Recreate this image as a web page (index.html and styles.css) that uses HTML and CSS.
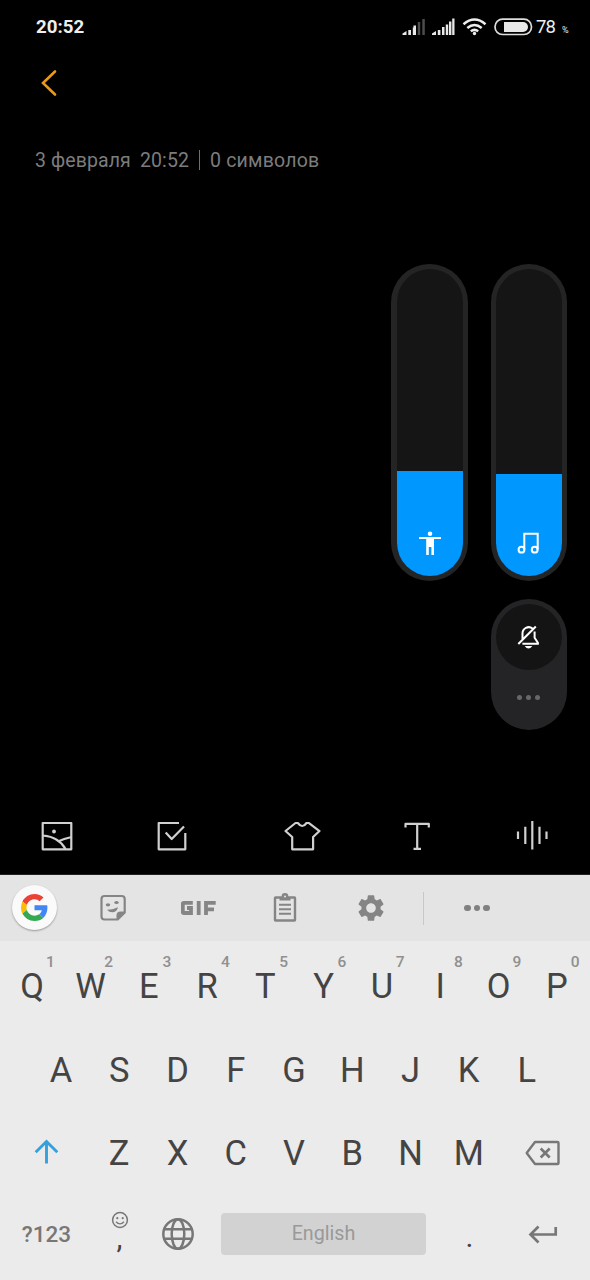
FILE: index.html
```html
<!DOCTYPE html>
<html lang="ru">
<head>
<meta charset="utf-8">
<title>Заметки</title>
<link rel="stylesheet" href="styles.css">
</head>
<body>
<div class="phone">
  <header class="status">
    <span class="clock">20:52</span>
    <svg class="signals" viewBox="402 17 86 20">
      <g fill="#e8e8e8">
        <path d="M402.500 35v-1.500l4-2.500V35zM408.300 30h2.700v5h-2.700zM412.800 27.500h2.700V35h-2.700z"/>
        <path d="M413.500 25.500h2.500V35h-2.500z"/>
        <path fill="#4c4c4c" d="M417.800 22h2.400v13h-2.400zM422.300 19h2.500v16h-2.500z"/>
        <path d="M432 35v-1.500l4-2.500V35zM437.800 30h2.600v5h-2.600zM442 27h2.500v8H442zM445.800 24.500h2.400V35h-2.400zM449 21.500h2.400V35H449zM452.200 18.500h2.300V35h-2.300z"/>
      </g>
      <g fill="none" stroke="#eee" stroke-width="2.500">
        <path d="M463.500 24.300q11-9.500 22 0M467.300 28q7.200-6 14.400 0M470.800 31.300q3.700-2.800 7.400 0"/>
      </g>
      <circle cx="474.500" cy="33.500" r="1.700" fill="#eee"/>
    </svg>
    <svg class="battery" viewBox="494 18 39 18"><rect x="495" y="19.200" width="36.500" height="15.300" rx="7.600" fill="none" stroke="#ddd" stroke-width="1.700"/><path d="M504 22h19a5 5 0 0 1 0 10h-19z" fill="#e8e8e8"/></svg>
    <span class="level">78</span><span class="percent">%</span>
  </header>
  <nav class="back"><svg width="20" height="30" viewBox="40 68 20 30"><path d="M55 71.500L43 83l12 11.500" fill="none" stroke="#e99a1c" stroke-width="2.600" stroke-linecap="round"/></svg></nav>
  <main class="note">
    <div class="meta"><span class="day">3 февраля</span><span class="time">20:52</span><i class="bar"></i><span class="count">0 символов</span></div>
  </main>
  <aside class="volume">
    <div class="slider access"><div class="fill fill-access"><svg width="24" height="26" viewBox="417 530 24 26" fill="#fff"><circle cx="429" cy="533.800" r="2.300"/><path d="M418 537h22v2h-7v16h-2.600v-8h-2.600v8h-2.600v-16H418z"/></svg></div></div>
    <div class="slider"><div class="fill fill-media"><svg width="24" height="26" viewBox="517 530 24 26" fill="none" stroke="#fff" stroke-width="2"><path d="M524.300 549.500V533.700h13.400v15.800"/><circle cx="521.500" cy="549.700" r="2.900"/><circle cx="534.700" cy="549.700" r="2.900"/></svg></div></div>
    <div class="ringer">
      <div class="mute"><svg width="26" height="28" viewBox="516 623 26 28" fill="none" stroke="#fff" stroke-width="2"><path d="M522.500 639v-5.500a6.200 6.200 0 0 1 10-5M534.600 631.500v6.200l3.300 5v1h-15.500M518.300 644l17.500-17.500"/><path d="M524.700 646h7.600q-3.800 5-7.600 0z" fill="#fff" stroke="none"/></svg></div>
      <div class="more"><i></i><i></i><i></i></div>
    </div>
  </aside>
  <nav class="tools">
    <span><svg width="36" height="36" viewBox="39 818 36 36"><path d="M42.700 823h28.600v26.300H42.700zM43 835.500q16 1.500 22.500 13.500M58.500 841.300q5-2.500 13-4.300"/><circle class="dot" cx="54" cy="831.500" r="1.900"/></svg></span>
    <span><svg width="36" height="36" viewBox="154 818 36 36"><path d="M179 823h-20.300v26.300h26.600V833M165.700 832.500l6 6.500L184 826.500"/></svg></span>
    <span class="middle"><svg width="40" height="36" viewBox="282 818 40 36"><path d="M295.500 823L285.500 831l6.700 6v12.300h20.900V837l6.400-6-10.500-8h-2.500q-4.300 6-8.600 0z"/></svg></span>
    <span><svg width="36" height="36" viewBox="399 818 36 36"><path d="M405.500 827.500v-3.600h23.300v3.600M417.200 824v24.800M413.500 848.800h7.500"/></svg></span>
    <span><svg width="36" height="36" viewBox="514 818 36 36"><path d="M518 831.500v7.500M525.300 826.700V844M532.300 821v28.500M539.500 826.700V844M546.500 831.500v7.500"/></svg></span>
  </nav>
  <section class="keyboard">
    <div class="strip">
      <span class="cell first"><span class="google"><svg width="27" height="27" viewBox="0 0 48 48"><path fill="#ea4335" d="M24 9.500c3.540 0 6.710 1.220 9.210 3.600l6.850-6.850C35.900 2.380 30.470 0 24 0 14.620 0 6.510 5.380 2.560 13.220l7.980 6.190C12.430 13.720 17.740 9.500 24 9.500z"/><path fill="#4285f4" d="M46.980 24.550c0-1.570-.15-3.090-.38-4.550H24v9.020h12.940c-.58 2.960-2.260 5.480-4.780 7.180l7.730 6c4.510-4.180 7.090-10.360 7.090-17.650z"/><path fill="#fbbc05" d="M10.530 28.590A14.500 14.500 0 0 1 9.770 24c0-1.600.27-3.140.76-4.590l-7.980-6.190A24 24 0 0 0 0 24c0 3.880.92 7.540 2.560 10.780z"/><path fill="#34a853" d="M24 48c6.480 0 11.930-2.130 15.890-5.810l-7.730-6c-2.150 1.450-4.920 2.300-8.160 2.300-6.260 0-11.570-4.220-13.470-9.910l-7.980 6.190C6.510 42.620 14.620 48 24 48z"/></svg></span></span>
      <span class="cell wide"><svg width="28" height="28" viewBox="99 894 28 28"><path d="M104.500 896h17.200a3 3 0 0 1 3 3v13.500l-7 7h-13.200a3 3 0 0 1-3-3V899a3 3 0 0 1 3-3z" fill="none" stroke="#858585" stroke-width="2.200"/><path d="M125 911.500v1.500l-7 7h-1.500v-4.500q0-4 4-4z" fill="#858585"/><ellipse cx="108" cy="904.800" rx="2.200" ry="1.600" fill="#858585"/><ellipse cx="116.500" cy="902.500" rx="2.200" ry="1.600" fill="#858585"/><path d="M107 909.700q5.500 0 11-2.500-1 4.700-5 5-3.500.300-6-2.500z" fill="#858585"/></svg></span>
      <span class="cell gif"><svg width="36" height="16" viewBox="181 899 36 16" fill="none" stroke="#858585" stroke-width="3.800"><path d="M192.800 901.800H183.800a1 1 0 0 0-1 1V911a1 1 0 0 0 1 1h7.200v-5h-4M198.700 900v14M206 914v-12.200h9.700M206 908.300h8"/></svg></span>
      <span class="cell clip"><svg width="26" height="30" viewBox="272 892 26 30" fill="none" stroke="#858585" stroke-width="2.400"><path d="M275.500 896.500h19q.500 0 .5.500v22q0 .500-.5.500h-19q-.5 0-.5-.500v-22q0-.500.500-.5z"/><path d="M279.500 896h11v3.500h-11z" fill="#858585" stroke="none"/><circle cx="285" cy="895.500" r="2.200" fill="#e4e4e4"/><path d="M279 903.700h12M279 908.200h12M279 912.700h12" stroke-width="2"/></svg></span>
      <span class="cell wide"><svg width="32" height="32" viewBox="0 0 24 24"><path fill="#858585" d="M19.140 12.940c.040-.300.060-.610.060-.940 0-.320-.020-.640-.070-.940l2.030-1.580c.180-.140.230-.410.120-.610l-1.920-3.320c-.120-.220-.370-.290-.590-.220l-2.390.960c-.500-.380-1.030-.700-1.620-.940l-.360-2.540c-.040-.240-.240-.410-.480-.410h-3.840c-.240 0-.430.170-.470.410l-.360 2.540c-.590.240-1.130.570-1.620.940l-2.390-.960c-.220-.080-.470 0-.590.220L2.740 8.870c-.120.210-.080.470.120.610l2.030 1.580c-.050.300-.090.630-.090.940s.020.640.070.940l-2.030 1.580c-.180.140-.230.410-.120.610l1.920 3.320c.120.220.370.290.590.220l2.390-.960c.500.380 1.030.700 1.620.940l.360 2.540c.050.240.240.410.480.410h3.840c.240 0 .440-.170.470-.410l.360-2.540c.590-.240 1.130-.560 1.620-.940l2.390.960c.220.080.470 0 .590-.220l1.920-3.320c.120-.220.070-.470-.120-.610l-2.010-1.580zM12 15.600c-1.980 0-3.600-1.620-3.600-3.600s1.620-3.600 3.600-3.600 3.600 1.620 3.600 3.600-1.620 3.600-3.600 3.600z"/></svg></span>
      <i class="divider"></i>
      <span class="cell dots"><i></i><i></i><i></i></span>
    </div>
    <div class="row letters">
      <b>Q<sup>1</sup></b><b>W<sup>2</sup></b><b>E<sup>3</sup></b><b>R<sup>4</sup></b><b>T<sup>5</sup></b><b>Y<sup>6</sup></b><b>U<sup>7</sup></b><b>I<sup>8</sup></b><b>O<sup>9</sup></b><b>P<sup>0</sup></b>
    </div>
    <div class="row home">
      <b>A</b><b>S</b><b>D</b><b>F</b><b>G</b><b>H</b><b>J</b><b>K</b><b>L</b>
    </div>
    <div class="row lower">
      <b><svg width="30" height="30" viewBox="32 1138 30 30"><path d="M46.500 1163.500v-22M35.700 1152.200l10.800-10.700 10.800 10.700" fill="none" stroke="#36a0dc" stroke-width="2.900"/></svg></b><b>Z</b><b>X</b><b>C</b><b>V</b><b>B</b><b>N</b><b>M</b><b><svg width="38" height="28" viewBox="523 1138 38 28" fill="none" stroke="#777"><path d="M535 1141h22.500q1 0 1 1v20q0 1-1 1H535l-8.300-11z" stroke-width="2.400" stroke-linejoin="round"/><path d="M540.700 1147.500l9 9m0-9l-9 9" stroke-width="2.600"/></svg></b>
    </div>
    <div class="row bottom">
      <b class="symbols">?123</b>
      <b class="comma"><svg width="18" height="18" viewBox="0 0 18 18"><circle cx="9" cy="9" r="7.400" fill="none" stroke="#777" stroke-width="1.500"/><circle cx="6.300" cy="7.200" r="1.100" fill="#777"/><circle cx="11.700" cy="7.200" r="1.100" fill="#777"/><path d="M5 10.700q4 4.300 8 0" fill="none" stroke="#777" stroke-width="1.400"/></svg><span>,</span></b>
      <b><svg width="34" height="34" viewBox="0 0 34 34" fill="none" stroke="#777" stroke-width="2.500"><circle cx="17" cy="17" r="14.700"/><ellipse cx="17" cy="17" rx="6.300" ry="14.700"/><path d="M3.500 12.200h27M3.500 21.800h27"/></svg></b>
      <b class="space">English</b>
      <b class="period">.</b>
      <b><svg width="32" height="22" viewBox="526 1223 32 22"><path d="M554.700 1227v7.500H530M537.500 1226.500l-8 8 8 8" fill="none" stroke="#777" stroke-width="2.700"/></svg></b>
    </div>
  </section>
</div>
</body>
</html>
```
FILE: styles.css
```css
* { box-sizing: border-box; }
body { margin: 0; background: #000; font-family: Roboto, "Noto Sans", sans-serif; }
svg { display: block; flex: none; }
.phone { position: relative; display: flex; flex-direction: column; width: 590px; height: 1280px; overflow: hidden; background: #000; }

.status { display: flex; align-items: center; height: 54px; padding-left: 36px; color: #eee; }
.clock { width: 366px; font-size: 18.7px; font-weight: 700; }
.signals { width: 86px; height: 20px; }
.battery { width: 39px; height: 18px; margin-left: 6px; }
.level { width: 26px; margin-left: 3px; font-size: 18.5px; letter-spacing: -1px; }
.percent { margin-top: 5px; font-size: 9px; }

.back { height: 58px; padding: 14px 0 0 40px; }
.note { flex: 1; padding: 37px 35px 0; color: #7c7c7c; }
.meta { display: flex; align-items: center; height: 23px; font-size: 19.5px; white-space: nowrap; }
.day { width: 105px; letter-spacing: .1px; }
.time { width: 59px; letter-spacing: .1px; }
.bar { width: 1px; height: 20px; margin: -2px 10px 0 0; background: #707070; }
.count { letter-spacing: .2px; }

/* Volume panel floats above the note */
.volume { position: absolute; top: 264px; right: 23px; display: grid; grid-template-columns: 77px 76px; gap: 18px 23px; }
.slider { display: flex; align-items: flex-end; height: 317px; padding: 5px; border-radius: 39px; background: #242425; }
.access { padding: 5px 5.500px 5px 6px; }
.slider::before { content: ""; flex: none; width: 100%; height: 307px; margin-right: -100%; border-radius: 34px; background: #151515; }
.fill { position: relative; display: flex; justify-content: center; width: 100%; border-radius: 0 0 34px 34px; background: #0097ff; }
.fill-access { height: 105px; padding-top: 59px; }
.fill-media { height: 102px; padding-top: 56px; }
.ringer { grid-column: 2; height: 131px; padding: 5px; border-radius: 38px; background: #242427; }
.mute { display: flex; align-items: center; justify-content: center; height: 66px; border-radius: 50%; background: #141414; }
.more { display: flex; justify-content: center; gap: 4.400px; margin: 24.500px 1px 0 0; }
.more i { width: 5px; height: 5px; border-radius: 50%; background: #68686a; }

.tools { display: flex; align-items: center; height: 78px; border-bottom: 1px solid #222; }
.tools span { display: flex; justify-content: center; width: 115px; }
.tools span:first-child { width: 114px; }
.tools .middle { margin-left: 15px; }
.tools svg { fill: none; stroke: #d0d0d0; stroke-width: 2.200; stroke-linejoin: round; }
.tools .dot { fill: #d0d0d0; stroke: none; }

.keyboard { height: 405px; background: #ebebeb; }
.strip { display: flex; align-items: center; height: 66px; background: #e4e4e4; }
.cell { display: flex; align-items: center; justify-content: center; width: 85px; }
.first { width: 70px; padding: 0 1px 1px 0; }
.wide { width: 86px; }
.clip { width: 87px; }
.google { display: flex; align-items: center; justify-content: center; width: 45px; height: 45px; border-radius: 50%; background: #fafafa; box-shadow: 0 1px 2px #0005; }
.gif { padding-bottom: 1px; }
.divider { width: 1px; height: 33px; margin-left: 9px; background: #c8c8c8; }
.dots { width: 106px; gap: 3px; }
.dots i { width: 6.500px; height: 6.500px; border-radius: 50%; background: #808080; }

.row { display: grid; height: 83.500px; padding: 0 4px 0 3px; color: #444; font-size: 34.500px; }
.row b { position: relative; display: flex; align-items: center; justify-content: center; font-weight: 400; line-height: 1; }
.letters { grid-template-columns: repeat(10, 1fr); padding-top: 7px; }
.row sup { position: absolute; top: 7px; left: 43px; font-size: 15.500px; font-weight: 500; line-height: 1; color: #909090; }
.home { grid-template-columns: repeat(9, 1fr); padding: 7px 34px 0 32px; }
.lower { grid-template-columns: 87px repeat(7, 58.300px) 1fr; padding-top: 6px; }
.bottom { grid-template-columns: 87px 59px 58px 233px 59px 1fr; padding-top: 2px; }
.row .symbols { font-size: 22.500px; font-weight: 500; color: #777; }
.row .comma { flex-direction: column; justify-content: flex-start; padding-top: 17px; }
.comma span { margin-top: -4px; font-size: 30px; line-height: 26px; }
.row .space { align-self: center; justify-self: center; width: 205px; height: 42px; border-radius: 4px; background: #d2d2d2; color: #999; font-size: 19.700px; }
.row .period { padding-top: 6px; font-size: 30px; }
```
